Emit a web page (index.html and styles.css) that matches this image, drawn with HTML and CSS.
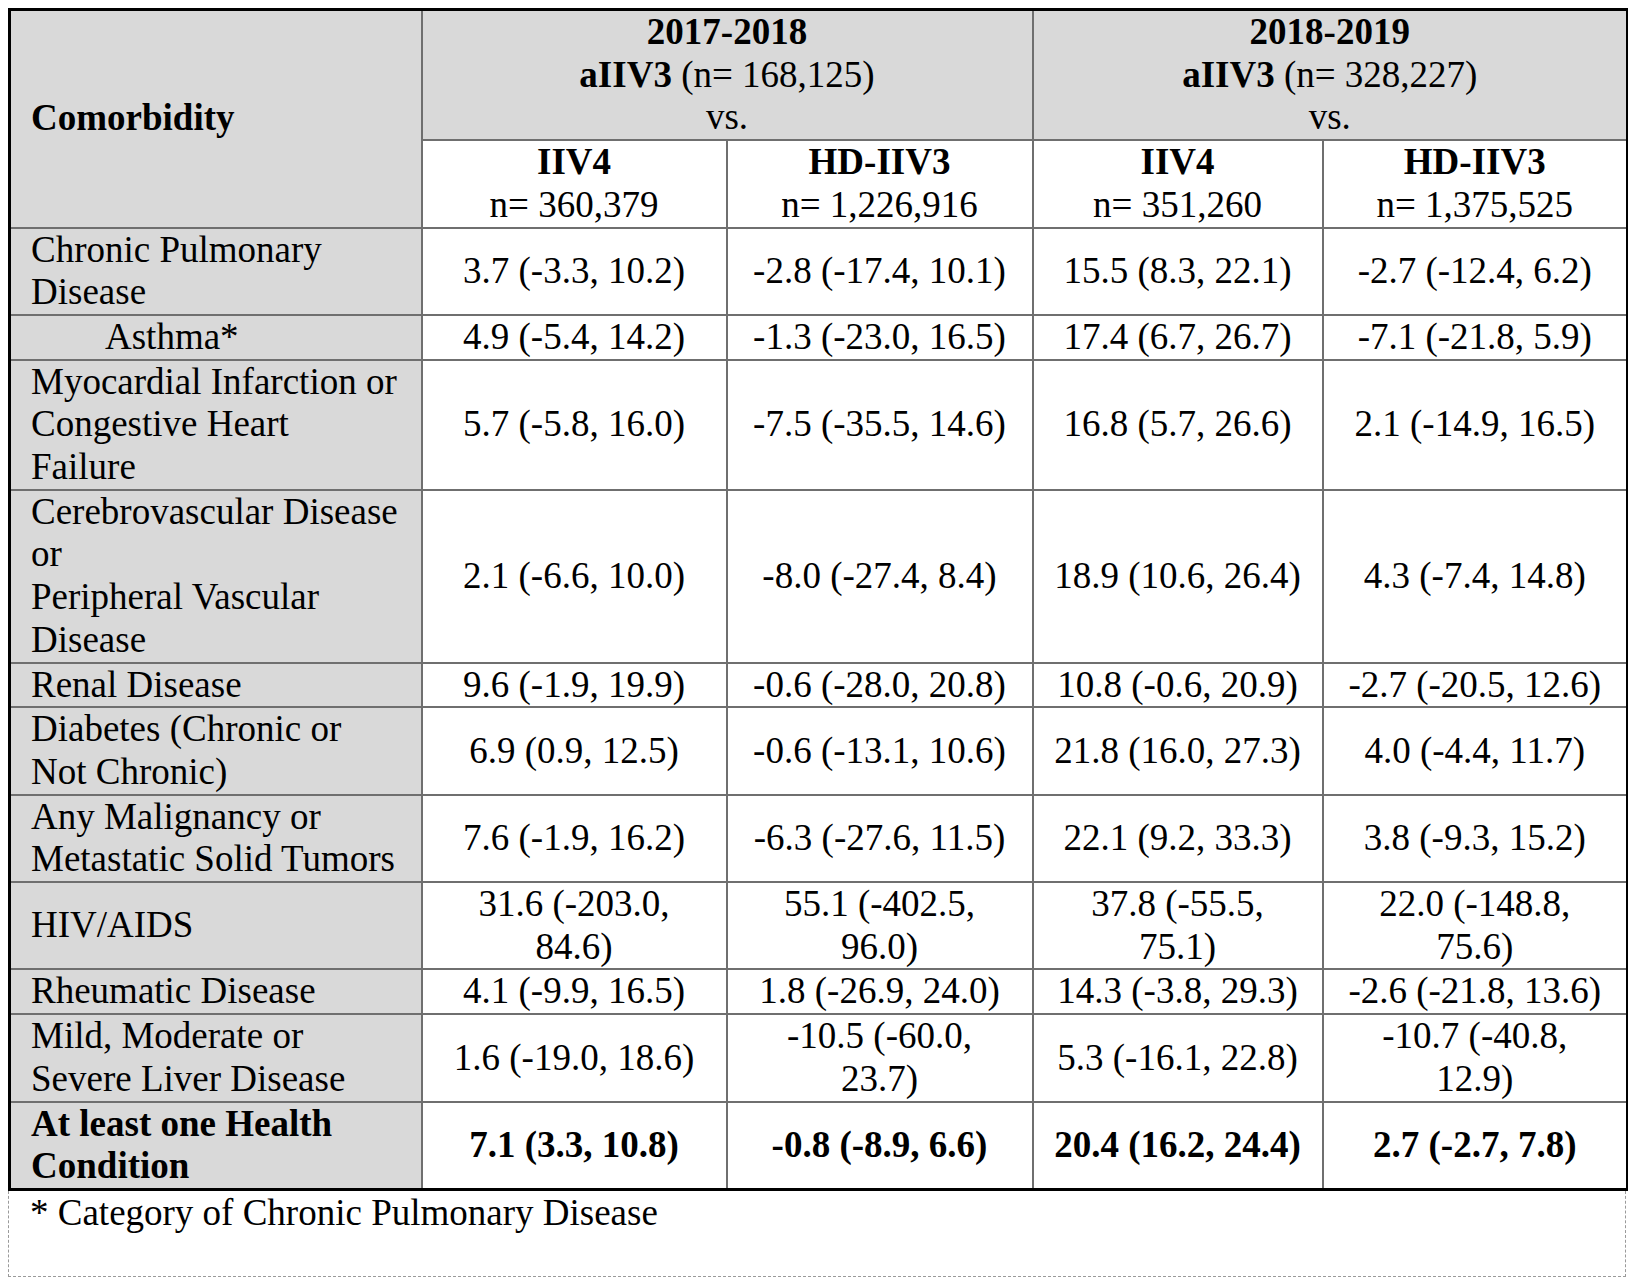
FILE: index.html
```html
<!DOCTYPE html>
<html lang="en">
<head>
<meta charset="utf-8">
<title>Comorbidity table</title>
<link rel="stylesheet" href="styles.css">
</head>
<body>
<table class="tbl">
  <colgroup>
    <col class="c1"><col class="c2"><col class="c3"><col class="c4"><col class="c5">
  </colgroup>
  <thead>
    <tr>
      <th class="label head comorb" rowspan="2">Comorbidity</th>
      <th class="season" colspan="2"><b>2017-2018</b><br><b>aIIV3</b> (n= 168,125)<br>vs.</th>
      <th class="season" colspan="2"><b>2018-2019</b><br><b>aIIV3</b> (n= 328,227)<br>vs.</th>
    </tr>
    <tr>
      <th class="sub"><b>IIV4</b><br>n= 360,379</th>
      <th class="sub"><b>HD-IIV3</b><br>n= 1,226,916</th>
      <th class="sub"><b>IIV4</b><br>n= 351,260</th>
      <th class="sub"><b>HD-IIV3</b><br>n= 1,375,525</th>
    </tr>
  </thead>
  <tbody>
    <tr><td class="label">Chronic Pulmonary Disease</td><td>3.7 (-3.3, 10.2)</td><td>-2.8 (-17.4, 10.1)</td><td>15.5 (8.3, 22.1)</td><td>-2.7 (-12.4, 6.2)</td></tr>
    <tr><td class="label indent">Asthma*</td><td>4.9 (-5.4, 14.2)</td><td>-1.3 (-23.0, 16.5)</td><td>17.4 (6.7, 26.7)</td><td>-7.1 (-21.8, 5.9)</td></tr>
    <tr><td class="label">Myocardial Infarction or Congestive Heart Failure</td><td>5.7 (-5.8, 16.0)</td><td>-7.5 (-35.5, 14.6)</td><td>16.8 (5.7, 26.6)</td><td>2.1 (-14.9, 16.5)</td></tr>
    <tr><td class="label">Cerebrovascular Disease or<br>Peripheral Vascular Disease</td><td>2.1 (-6.6, 10.0)</td><td>-8.0 (-27.4, 8.4)</td><td>18.9 (10.6, 26.4)</td><td>4.3 (-7.4, 14.8)</td></tr>
    <tr><td class="label">Renal Disease</td><td>9.6 (-1.9, 19.9)</td><td>-0.6 (-28.0, 20.8)</td><td>10.8 (-0.6, 20.9)</td><td>-2.7 (-20.5, 12.6)</td></tr>
    <tr><td class="label">Diabetes (Chronic or Not Chronic)</td><td>6.9 (0.9, 12.5)</td><td>-0.6 (-13.1, 10.6)</td><td>21.8 (16.0, 27.3)</td><td>4.0 (-4.4, 11.7)</td></tr>
    <tr><td class="label">Any Malignancy or Metastatic Solid Tumors</td><td>7.6 (-1.9, 16.2)</td><td>-6.3 (-27.6, 11.5)</td><td>22.1 (9.2, 33.3)</td><td>3.8 (-9.3, 15.2)</td></tr>
    <tr><td class="label">HIV/AIDS</td><td>31.6 (-203.0, 84.6)</td><td>55.1 (-402.5, 96.0)</td><td>37.8 (-55.5, 75.1)</td><td>22.0 (-148.8, 75.6)</td></tr>
    <tr><td class="label">Rheumatic Disease</td><td>4.1 (-9.9, 16.5)</td><td>1.8 (-26.9, 24.0)</td><td>14.3 (-3.8, 29.3)</td><td>-2.6 (-21.8, 13.6)</td></tr>
    <tr><td class="label">Mild, Moderate or Severe Liver Disease</td><td>1.6 (-19.0, 18.6)</td><td>-10.5 (-60.0, 23.7)</td><td>5.3 (-16.1, 22.8)</td><td>-10.7 (-40.8, 12.9)</td></tr>
    <tr class="total"><td class="label">At least one Health Condition</td><td>7.1 (3.3, 10.8)</td><td>-0.8 (-8.9, 6.6)</td><td>20.4 (16.2, 24.4)</td><td>2.7 (-2.7, 7.8)</td></tr>
  </tbody>
</table>
<div class="note">* Category of Chronic Pulmonary Disease</div>
</body>
</html>
```

FILE: styles.css
```css
body {
  margin: 8px;
  font-family: "Liberation Serif", "Times New Roman", serif;
  font-size: 37px;
  color: #000;
  background: #fff;
}

.tbl {
  border-collapse: collapse;
  table-layout: fixed;
  width: 1618px;
  border: 3px solid #000;
}

.c1 { width: 412px; }
.c2 { width: 305px; }
.c3 { width: 306px; }
.c4 { width: 290px; }
.c5 { width: 305px; }

.tbl th,
.tbl td {
  border: 2px solid #6f6f6f;
  padding: 0 18px;
  line-height: 42.7px;
  vertical-align: middle;
  text-align: center;
  font-weight: normal;
}

.tbl .label {
  background: #d9d9d9;
  text-align: left;
  padding-left: 20px;
  padding-right: 22px;
}

.tbl .comorb {
  font-weight: bold;
}

.tbl .indent {
  padding-left: 94px;
}

.season {
  background: #d9d9d9;
}

.sub {
  background: #fff;
}

.total td {
  font-weight: bold;
}

.note {
  width: 1618px;
  box-sizing: border-box;
  height: 86px;
  border: 1px dashed #9a9a9a;
  border-top: none;
  padding-left: 21px;
  line-height: 43px;
}
```
